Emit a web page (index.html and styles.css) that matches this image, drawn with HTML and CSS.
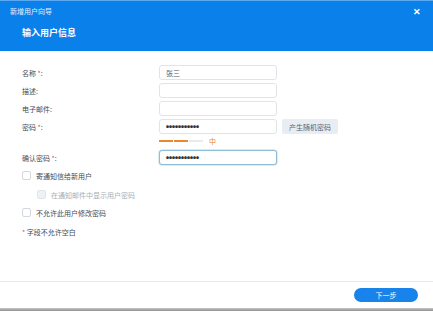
FILE: index.html
```html
<!DOCTYPE html>
<html lang="zh">
<head>
<meta charset="utf-8">
<link rel="stylesheet" href="styles.css">
</head>
<body>
<div class="dialog">
  <div class="header">
    <div class="topbar">
      <span class="wiz">新增用户向导</span>
      <span class="close">✕</span>
    </div>
    <div class="subtitle">输入用户信息</div>
  </div>
  <div class="content">
    <div class="row">
      <label class="lbl">名称 <span class="req">*</span>:</label>
      <div class="input">张三</div>
    </div>
    <div class="row">
      <label class="lbl">描述:</label>
      <div class="input"></div>
    </div>
    <div class="row">
      <label class="lbl">电子邮件:</label>
      <div class="input"></div>
    </div>
    <div class="row">
      <label class="lbl">密码 <span class="req">*</span>:</label>
      <div class="input dots">●●●●●●●●●●●</div>
      <button class="gen">产生随机密码</button>
    </div>
    <div class="strength">
      <span class="seg on"></span><span class="seg on"></span><span class="seg"></span>
      <span class="lvl">中</span>
    </div>
    <div class="row">
      <label class="lbl">确认密码 <span class="req">*</span>:</label>
      <div class="input dots focus">●●●●●●●●●●●</div>
    </div>
    <div class="check c1"><span class="box"></span><span>寄通知信给新用户</span></div>
    <div class="check sub"><span class="box disabled"></span><span class="dis">在通知邮件中显示用户密码</span></div>
    <div class="check c3"><span class="box"></span><span>不允许此用户修改密码</span></div>
    <div class="note"><span class="req">*</span> 字段不允许空白</div>
  </div>
  <div class="footer">
    <button class="next">下一步</button>
  </div>
</div>
<div class="shade"></div>
</body>
</html>
```
FILE: styles.css
```css
html, body {
  margin: 0;
  padding: 0;
  background: #fff;
  font-family: "Noto Sans CJK SC", "Noto Sans", sans-serif;
  overflow: hidden;
}
.dialog {
  width: 433px;
  height: 308px;
  display: flex;
  flex-direction: column;
  background: #fff;
}
.header {
  height: 51px;
  background: #0a80ea;
  color: #fff;
  box-sizing: border-box;
  border-top: 1px solid #5aa8f0;
  padding: 0 0 0 10px;
}
.topbar {
  display: flex;
  justify-content: space-between;
  align-items: center;
  height: 20px;
  padding-right: 12px;
}
.wiz {
  font-size: 7px;
  color: #e6f1fd;
}
.close {
  font-size: 9px;
  font-weight: bold;
  color: #fff;
}
.subtitle {
  margin-top: 5px;
  padding-left: 12px;
  font-size: 9px;
  font-weight: bold;
  line-height: 14px;
}
.content {
  flex: 1;
  padding: 14px 0 0 22px;
  display: flex;
  flex-direction: column;
}
.row {
  display: flex;
  align-items: center;
  height: 15px;
  margin-bottom: 3px;
}
.lbl {
  width: 137px;
  font-size: 7px;
  color: #454c55;
}
.req {
  color: #e0505a;
}
.input {
  width: 118px;
  height: 15px;
  box-sizing: border-box;
  border: 1px solid #dfe4ea;
  border-radius: 3px;
  background: #fff;
  font-size: 7px;
  color: #555;
  padding-left: 6px;
  display: flex;
  align-items: center;
}
.dots {
  font-size: 3px;
  letter-spacing: 0;
  color: #333;
}
.focus {
  border-color: #8ebfd4;
  box-shadow: 0 0 0 0.5px #b8d8e6;
}
.gen {
  margin-left: 5px;
  height: 15px;
  width: 56px;
  border: none;
  border-radius: 2px;
  background: #e8edf3;
  font-family: inherit;
  font-size: 7px;
  color: #5a6370;
  padding: 0;
}
.strength {
  display: flex;
  align-items: center;
  height: 9px;
  margin: -1px 0 5px 137px;
}
.seg {
  width: 14px;
  height: 2px;
  background: #e8ebee;
  margin-right: 1px;
}
.seg.on {
  background: #e8892b;
}
.lvl {
  margin-left: 5px;
  font-size: 7px;
  color: #e8892b;
}
.check {
  display: flex;
  align-items: center;
  height: 11px;
  font-size: 7px;
  color: #454c55;
}
.c1 {
  margin-top: 2px;
}
.sub {
  margin-top: 8px;
  padding-left: 15px;
}
.c3 {
  margin-top: 7px;
}
.box {
  width: 9px;
  height: 9px;
  box-sizing: border-box;
  border: 1px solid #d3d8df;
  border-radius: 2px;
  background: #fff;
  margin-right: 5px;
}
.box.disabled {
  background: #eef1f5;
  border-color: #e2e6eb;
}
.dis {
  color: #a8afb8;
}
.note {
  margin-top: 9px;
  font-size: 7px;
  color: #454c55;
}
.footer {
  height: 26px;
  border-top: 1px solid #e8eaec;
  display: flex;
  justify-content: flex-end;
  align-items: center;
  padding-right: 15px;
}
.next {
  width: 64px;
  height: 14px;
  border: none;
  border-radius: 7px;
  background: #1883ea;
  color: #fff;
  font-family: inherit;
  font-size: 7px;
  padding: 0;
}
.shade {
  height: 3px;
  background: linear-gradient(#c8c8c8, #8e8e8e);
}
```
